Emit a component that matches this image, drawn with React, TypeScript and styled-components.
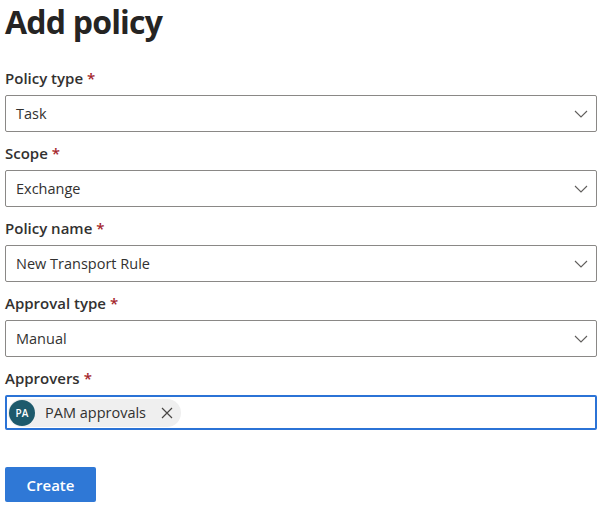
import styled, { createGlobalStyle } from 'styled-components'

const GlobalStyle = createGlobalStyle`
  body {
    margin: 0;
    background: #ffffff;
    font-family: 'Open Sans', 'Noto Sans', sans-serif;
    color: #323130;
  }
`

const Page = styled.div`
  width: 602px;
  padding: 0 5px;
  box-sizing: border-box;
`

const Heading = styled.h1`
  margin: 0 0 23px;
  font-size: 32px;
  line-height: 44px;
  font-weight: 700;
  letter-spacing: -0.8px;
  color: #252423;
`

const Form = styled.form`
  display: flex;
  flex-direction: column;
  gap: 10px;
`

const Field = styled.div`
  display: flex;
  flex-direction: column;
`

const Label = styled.label`
  font-size: 15px;
  line-height: 22px;
  font-weight: 600;
  margin-bottom: 6px;
  color: #323130;

  span {
    color: #a4262c;
    margin-left: 4px;
  }
`

const Select = styled.div`
  height: 37px;
  box-sizing: border-box;
  border: 1px solid #8a8886;
  border-radius: 2px;
  display: flex;
  align-items: center;
  justify-content: space-between;
  padding: 0 8px 0 10px;
  font-size: 14.5px;
  color: #323130;
`

const PeopleBox = styled.div`
  height: 35px;
  box-sizing: border-box;
  border: 2px solid #2b73d6;
  border-radius: 2px;
  display: flex;
  align-items: center;
  padding: 0 1px;
`

const Chip = styled.div`
  display: flex;
  align-items: center;
  height: 28px;
  border-radius: 14px;
  background: #efefef;
  padding-right: 8px;
  font-size: 14.5px;
  color: #323130;
`

const Avatar = styled.div`
  width: 26px;
  height: 26px;
  border-radius: 50%;
  background: #1d5a6c;
  color: #ffffff;
  font-size: 10px;
  font-weight: 600;
  display: flex;
  align-items: center;
  justify-content: center;
  margin: 0 10px 0 1px;
`

const Remove = styled.span`
  display: flex;
  margin-left: 15px;
`

const CreateButton = styled.button`
  align-self: flex-start;
  margin-top: 27px;
  width: 91px;
  height: 35px;
  border: none;
  border-radius: 2px;
  background: #2f78d6;
  color: #ffffff;
  font-family: inherit;
  font-size: 15px;
  font-weight: 600;
`

const Chevron = () => (
  <svg width="14" height="8" viewBox="0 0 14 8" fill="none">
    <path d="M1 1l6 6 6-6" stroke="#605e5c" strokeWidth="1.1" />
  </svg>
)

const Dismiss = () => (
  <svg width="12" height="12" viewBox="0 0 12 12" fill="none">
    <path d="M1 1l10 10M11 1L1 11" stroke="#484644" strokeWidth="1.2" />
  </svg>
)

const selects = [
  { label: 'Policy type', value: 'Task' },
  { label: 'Scope', value: 'Exchange' },
  { label: 'Policy name', value: 'New Transport Rule' },
  { label: 'Approval type', value: 'Manual' },
]

const App = () => {
  return (
    <>
      <GlobalStyle />
      <Page>
        <Heading>Add policy</Heading>
        <Form>
          {selects.map((s) => (
            <Field key={s.label}>
              <Label>
                {s.label}
                <span>*</span>
              </Label>
              <Select>
                {s.value}
                <Chevron />
              </Select>
            </Field>
          ))}
          <Field>
            <Label>
              Approvers
              <span>*</span>
            </Label>
            <PeopleBox>
              <Chip>
                <Avatar>PA</Avatar>
                PAM approvals
                <Remove>
                  <Dismiss />
                </Remove>
              </Chip>
            </PeopleBox>
          </Field>
          <CreateButton type="button">Create</CreateButton>
        </Form>
      </Page>
    </>
  )
}

export default App
